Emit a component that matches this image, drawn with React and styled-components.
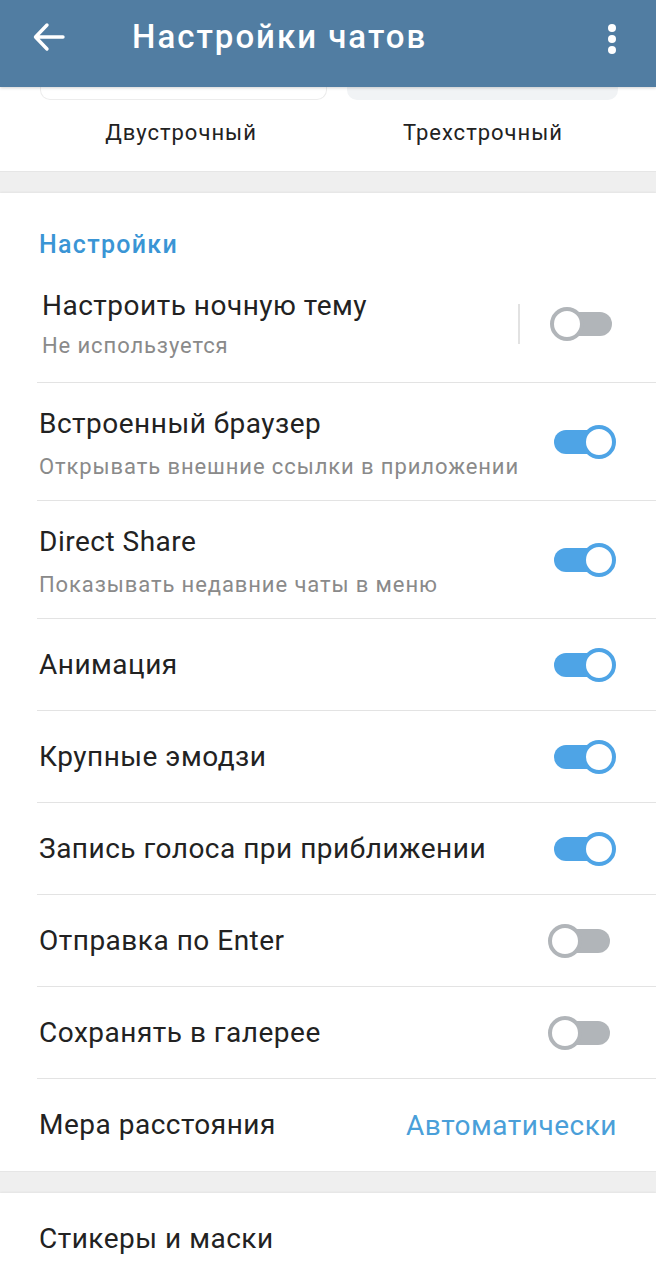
import React from "react";
import styled, { createGlobalStyle } from "styled-components";

const GlobalStyle = createGlobalStyle`
  body {
    margin: 0;
    background: #efefef;
    font-family: Roboto, "Noto Sans", sans-serif;
  }
`;

const items = [
  { title: "Встроенный браузер", sub: "Открывать внешние ссылки в приложении", on: true },
  { title: "Direct Share", sub: "Показывать недавние чаты в меню", on: true },
  { title: "Анимация", on: true },
  { title: "Крупные эмодзи", on: true },
  { title: "Запись голоса при приближении", on: true },
  { title: "Отправка по Enter", on: false },
  { title: "Сохранять в галерее", on: false },
];

function Toggle({ on }) {
  return (
    <Switch>
      <Track $on={on} />
      <Thumb $on={on} />
    </Switch>
  );
}

function App() {
  return (
    <>
      <GlobalStyle />
      <Page>
        <Header>
          <IconButton>
            <svg width="34" height="34" viewBox="0 0 34 34" fill="none" stroke="#fff" strokeWidth="3.4" strokeLinecap="round" strokeLinejoin="round">
              <path d="M31 17H4M15 5L3.5 17L15 29" />
            </svg>
          </IconButton>
          <Title>Настройки чатов</Title>
          <Dots>
            <svg width="10" height="34" viewBox="0 0 10 34" fill="#fff">
              <circle cx="5" cy="6" r="4" />
              <circle cx="5" cy="17" r="4" />
              <circle cx="5" cy="28" r="4" />
            </svg>
          </Dots>
        </Header>

        <Card>
          <Previews>
            <PreviewBox />
            <PreviewBox $filled />
          </Previews>
          <Labels>
            <Label>Двустрочный</Label>
            <Label>Трехстрочный</Label>
          </Labels>
        </Card>

        <Card $gap>
          <SectionTitle>Настройки</SectionTitle>
          <Row $tall $shift>
            <TextCol $tight>
              <RowTitle>Настроить ночную тему</RowTitle>
              <RowSub>Не используется</RowSub>
            </TextCol>
            <VLine />
            <SwitchWrap $shift>
              <Toggle on={false} />
            </SwitchWrap>
          </Row>
          {items.map((it) => (
            <Row key={it.title} $tall={!!it.sub}>
              <TextCol $sub={!!it.sub}>
                <RowTitle>{it.title}</RowTitle>
                {it.sub && <RowSub>{it.sub}</RowSub>}
              </TextCol>
              <SwitchWrap>
                <Toggle on={it.on} />
              </SwitchWrap>
            </Row>
          ))}
          <Row $last>
            <TextCol>
              <RowTitle>Мера расстояния</RowTitle>
            </TextCol>
            <Value>Автоматически</Value>
          </Row>
        </Card>

        <Card $gap>
          <Row $last>
            <TextCol>
              <RowTitle>Стикеры и маски</RowTitle>
            </TextCol>
          </Row>
        </Card>
      </Page>
    </>
  );
}

export default App;

const Page = styled.div`
  width: 656px;
  min-height: 1280px;
  background: #efefef;
  overflow: hidden;
`;

const Header = styled.div`
  position: relative;
  z-index: 2;
  height: 87px;
  background: #517da2;
  display: flex;
  align-items: flex-start;
  padding-top: 20px;
  box-sizing: border-box;
  box-shadow: 0 1px 3px rgba(0, 0, 0, 0.18);
`;

const IconButton = styled.div`
  width: 34px;
  height: 34px;
  margin-left: 32px;
  display: flex;
`;

const Title = styled.div`
  margin-left: 66px;
  color: #fff;
  font-size: 33px;
  font-weight: 500;
  letter-spacing: 2px;
  line-height: 34px;
  flex: 1;
`;

const Dots = styled.div`
  width: 10px;
  height: 34px;
  margin-right: 39px;
  margin-top: 2px;
  display: flex;
`;

const Card = styled.div`
  background: #fff;
  margin-top: ${(p) => (p.$gap ? "21px" : "0")};
  box-shadow: ${(p) => (p.$gap ? "0 -1px 2px rgba(0,0,0,0.05)" : "none")};
  border-bottom: 1px solid #e6e6e6;
`;

const Previews = styled.div`
  display: flex;
  gap: 20px;
  padding: 0 38px 0 40px;
`;

const PreviewBox = styled.div`
  flex: ${(p) => (p.$filled ? "272" : "286")};
  height: 13px;
  box-sizing: border-box;
  border: ${(p) => (p.$filled ? "none" : "1px solid #ececec")};
  border-top: none;
  background: ${(p) => (p.$filled ? "#f1f3f5" : "#fff")};
  border-radius: 0 0 10px 10px;
`;

const Labels = styled.div`
  display: flex;
  height: 71px;
  align-items: center;
  padding-bottom: 6px;
  box-sizing: border-box;
  padding-left: 30px;
  padding-right: 22px;
`;

const Label = styled.div`
  flex: 1;
  text-align: center;
  font-size: 22px;
  letter-spacing: 1px;
  color: #222;
`;

const SectionTitle = styled.div`
  padding: 38px 0 0 39px;
  height: 72px;
  box-sizing: border-box;
  font-size: 25px;
  letter-spacing: 1.3px;
  line-height: 28px;
  font-weight: 500;
  color: #3a95d5;
`;

const Row = styled.div`
  display: flex;
  align-items: center;
  height: ${(p) => (p.$tall ? "118px" : "92px")};
  margin-left: 37px;
  padding-left: ${(p) => (p.$shift ? "5px" : "2px")};
  box-sizing: border-box;
  border-bottom: ${(p) => (p.$last ? "none" : "1px solid #e3e3e3")};
`;

const TextCol = styled.div`
  flex: 1;
  display: flex;
  flex-direction: column;
  gap: ${(p) => (p.$tight ? "12px" : "15px")};
  min-width: 0;
  margin-top: ${(p) => (p.$sub ? "3px" : "0")};
`;

const RowTitle = styled.div`
  font-size: 28px;
  letter-spacing: 0.5px;
  line-height: 32px;
  color: #222;
`;

const RowSub = styled.div`
  font-size: 22px;
  letter-spacing: 0.9px;
  line-height: 24px;
  color: #8a8a8a;
  white-space: nowrap;
`;

const VLine = styled.div`
  width: 2px;
  height: 40px;
  background: #e2e2e2;
  margin-right: 30px;
`;

const SwitchWrap = styled.div`
  margin-right: ${(p) => (p.$shift ? "38px" : "40px")};
  display: flex;
`;

const Switch = styled.div`
  position: relative;
  width: 68px;
  height: 34px;
`;

const Track = styled.div`
  position: absolute;
  left: 6px;
  top: 5px;
  width: 56px;
  height: 24px;
  border-radius: 12px;
  background: ${(p) => (p.$on ? "#4ea4e6" : "#b1b5b9")};
`;

const Thumb = styled.div`
  position: absolute;
  top: 0;
  left: ${(p) => (p.$on ? "34px" : "0")};
  width: 34px;
  height: 34px;
  box-sizing: border-box;
  border-radius: 50%;
  background: #fff;
  border: 4px solid ${(p) => (p.$on ? "#4ea4e6" : "#b1b5b9")};
`;

const Value = styled.div`
  font-size: 28px;
  letter-spacing: 0.5px;
  color: #4a9fd9;
  margin-right: 39px;
`;
